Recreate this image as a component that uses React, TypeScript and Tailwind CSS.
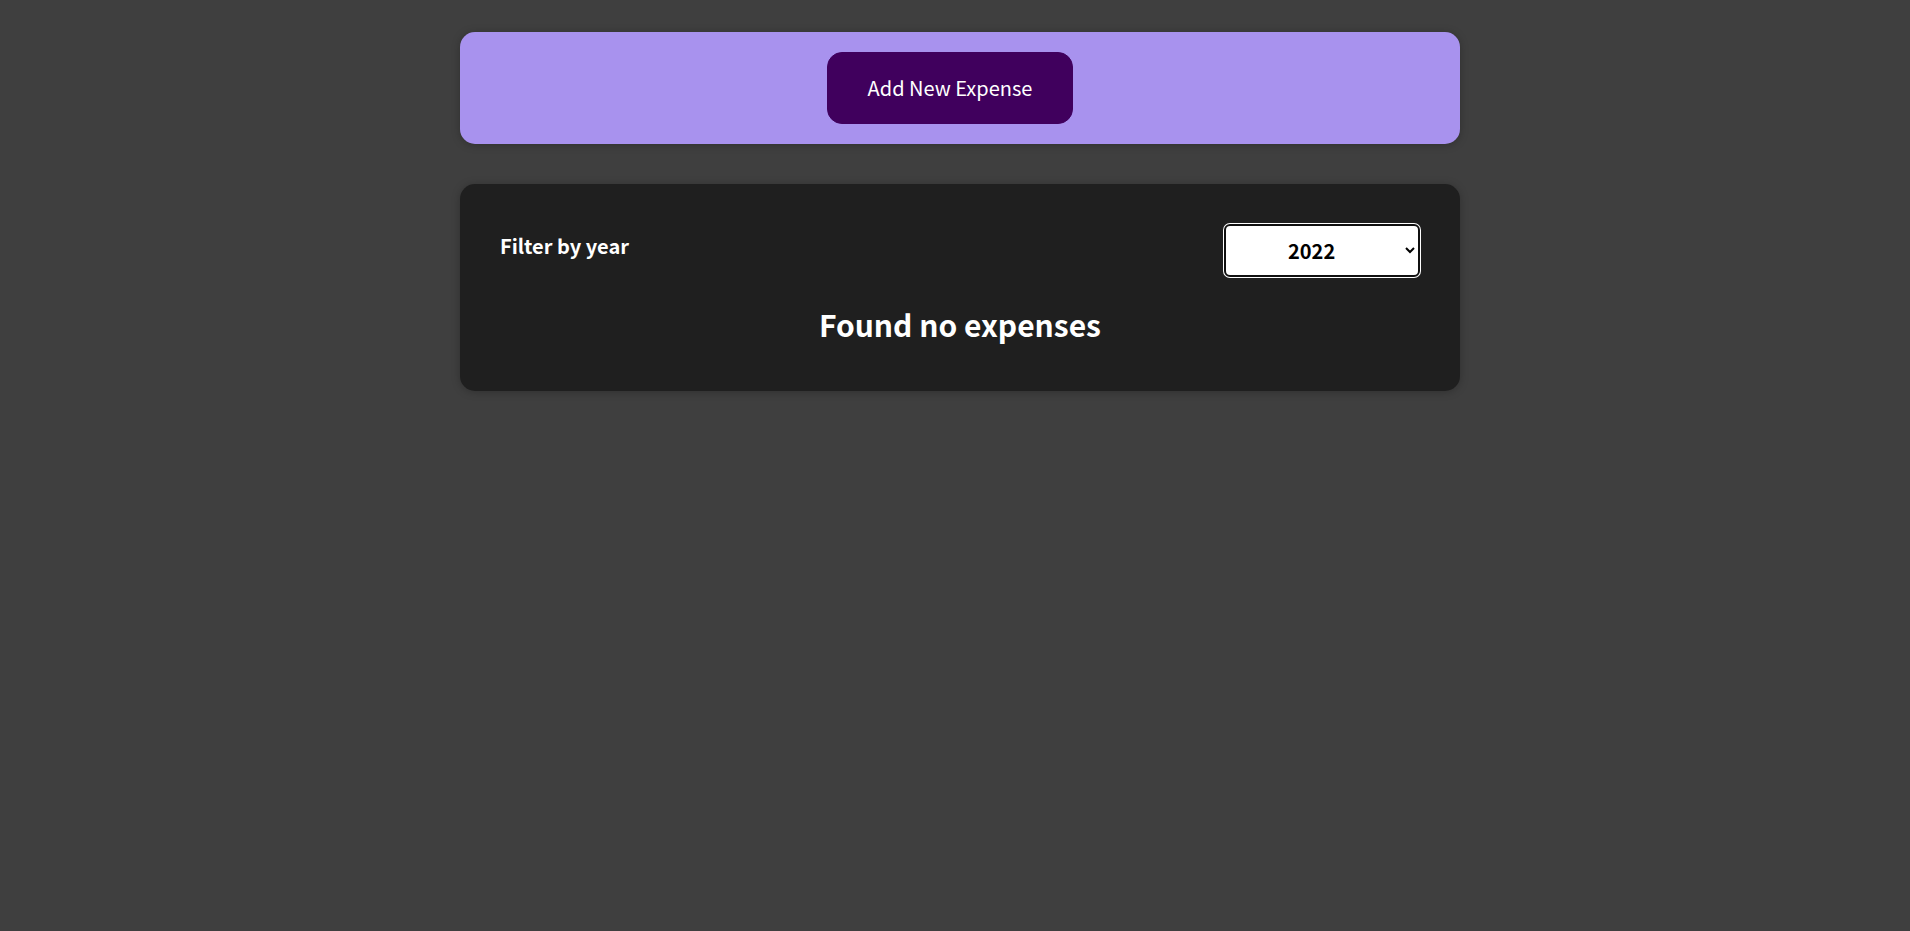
import { useState } from 'react';

const font = { fontFamily: '"Noto Sans CJK JP", "Noto Sans", sans-serif' };

const NewExpense = () => {
  return (
    <div className="mx-auto w-[1000px] rounded-[15px] bg-[#a892ee] p-5 text-center shadow-[0_1px_8px_rgba(0,0,0,0.25)]">
      <button className="mr-5 rounded-[15px] border border-[#40005d] bg-[#40005d] px-10 py-5 text-[20px] leading-[30px] text-white">
        Add New Expense
      </button>
    </div>
  );
};

const ExpensesFilter = ({ year, onChange }: { year: string; onChange: (y: string) => void }) => {
  return (
    <div className="px-5 text-white">
      <div className="my-5 flex w-full items-center justify-between">
        <label className="mb-[10px] text-[20px] font-bold leading-[30px]">Filter by year</label>
        <select
          value={year}
          onChange={(e) => onChange(e.target.value)}
          className="h-[53px] w-[196px] rounded-[6px] border-2 border-[#101010] bg-white px-[58px] text-[20px] font-bold text-black outline-none ring-1 ring-white"
          style={font}
        >
          <option value="2023">2023</option>
          <option value="2022">2022</option>
          <option value="2021">2021</option>
          <option value="2020">2020</option>
        </select>
      </div>
    </div>
  );
};

export default function App() {
  const [year, setYear] = useState('2022');

  return (
    <div className="min-h-[931px] bg-[#3f3f3f] pl-[10px] pt-8" style={font}>
      <NewExpense />
      <div className="mx-auto mt-10 w-[1000px] rounded-[15px] bg-[#1f1f1f] p-5 shadow-[0_1px_8px_rgba(0,0,0,0.25)]">
        <ExpensesFilter year={year} onChange={setYear} />
        <h2 className="pb-[22px] pt-[2px] text-center text-[30px] font-bold leading-[50px] text-white">
          Found no expenses
        </h2>
      </div>
    </div>
  );
}
